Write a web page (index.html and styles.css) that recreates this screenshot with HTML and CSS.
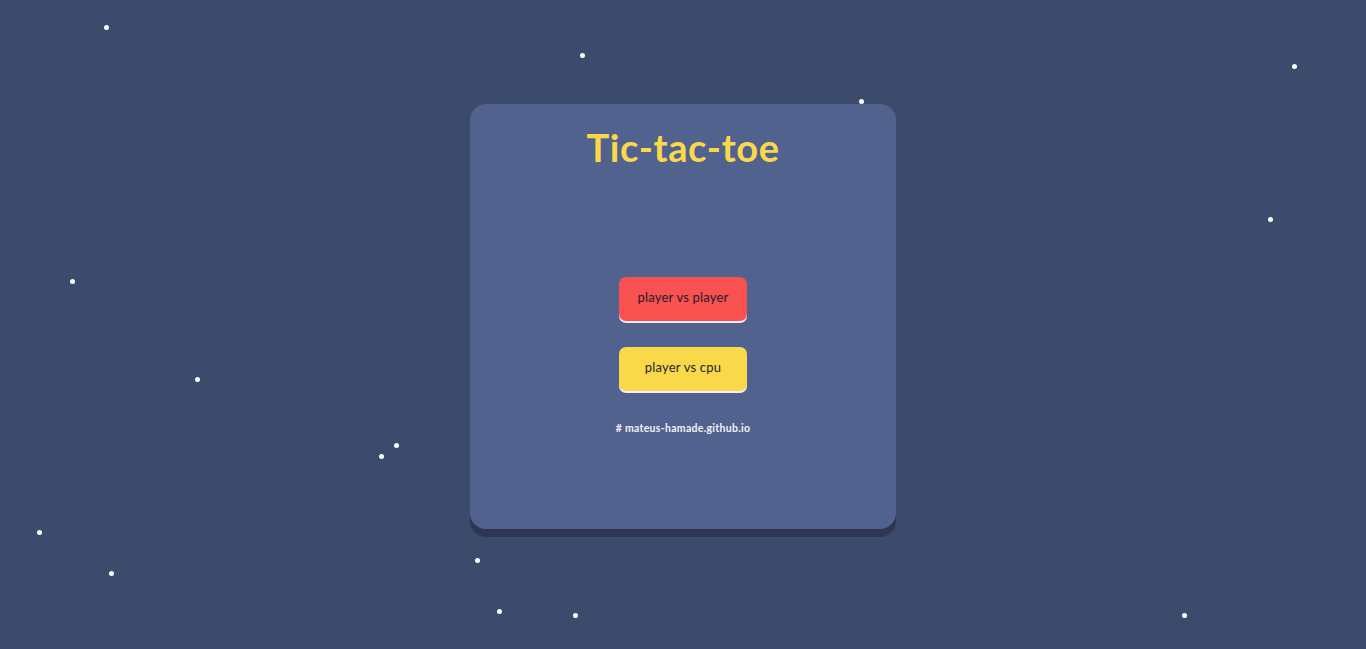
FILE: index.html
```html
<!DOCTYPE html>
<html>
<head>
<meta charset="utf-8">
<title>Tic-tac-toe</title>
<link rel="stylesheet" href="styles.css">
</head>
<body>
<div class="sky">
  <span class="star" style="left:104px;top:25px"></span>
  <span class="star" style="left:580px;top:53px"></span>
  <span class="star" style="left:859px;top:99px"></span>
  <span class="star" style="left:1292px;top:64px"></span>
  <span class="star" style="left:1268px;top:217px"></span>
  <span class="star" style="left:70px;top:279px"></span>
  <span class="star" style="left:195px;top:377px"></span>
  <span class="star" style="left:394px;top:443px"></span>
  <span class="star" style="left:379px;top:454px"></span>
  <span class="star" style="left:37px;top:530px"></span>
  <span class="star" style="left:109px;top:571px"></span>
  <span class="star" style="left:475px;top:558px"></span>
  <span class="star" style="left:497px;top:609px"></span>
  <span class="star" style="left:573px;top:613px"></span>
  <span class="star" style="left:1182px;top:613px"></span>
</div>
<main class="card">
  <h1 class="title">Tic-tac-toe</h1>
  <div class="menu">
    <button class="btn btn-red">player vs player</button>
    <button class="btn btn-yellow">player vs cpu</button>
    <p class="credit"># mateus-hamade.github.io</p>
  </div>
</main>
</body>
</html>
```

FILE: styles.css
```css
html, body {
  margin: 0;
  padding: 0;
}
body {
  background: #3c4a6c;
  height: 649px;
  overflow: hidden;
  font-family: "Lato", "Noto Sans", sans-serif;
  display: flex;
  justify-content: center;
  align-items: flex-start;
  padding-top: 104px;
  box-sizing: border-box;
  position: relative;
}
.sky {
  position: absolute;
  inset: 0;
}
.star {
  position: absolute;
  width: 5px;
  height: 5px;
  border-radius: 50%;
  background: #ffffff;
}
.card {
  position: relative;
  z-index: 1;
  width: 426px;
  height: 425px;
  background: #52628f;
  border-radius: 16px;
  box-shadow: 0 8px 0 #2e3651;
  display: flex;
  flex-direction: column;
  align-items: center;
  box-sizing: border-box;
  padding-top: 22px;
}
.title {
  margin: 0;
  color: #f9d84a;
  font-size: 38px;
  font-weight: 700;
  line-height: 42px;
  letter-spacing: 0.6px;
}
.menu {
  margin-top: 109px;
  display: flex;
  flex-direction: column;
  align-items: center;
  gap: 26px;
}
.btn {
  width: 128px;
  height: 44px;
  border: none;
  border-radius: 7px;
  padding: 0 0 4px;
  font-family: "Lato", "Noto Sans", sans-serif;
  font-size: 13px;
  letter-spacing: 0.2px;
  color: #1e1e2a;
  box-shadow: 0 2px 0 #f0eef2;
  cursor: pointer;
}
.btn-red {
  background: #f75150;
}
.btn-yellow {
  background: #f9d84a;
}
.credit {
  margin: 5px 0 0;
  color: #f2f2f6;
  font-size: 10.5px;
  font-weight: 700;
  letter-spacing: 0.3px;
}
```
